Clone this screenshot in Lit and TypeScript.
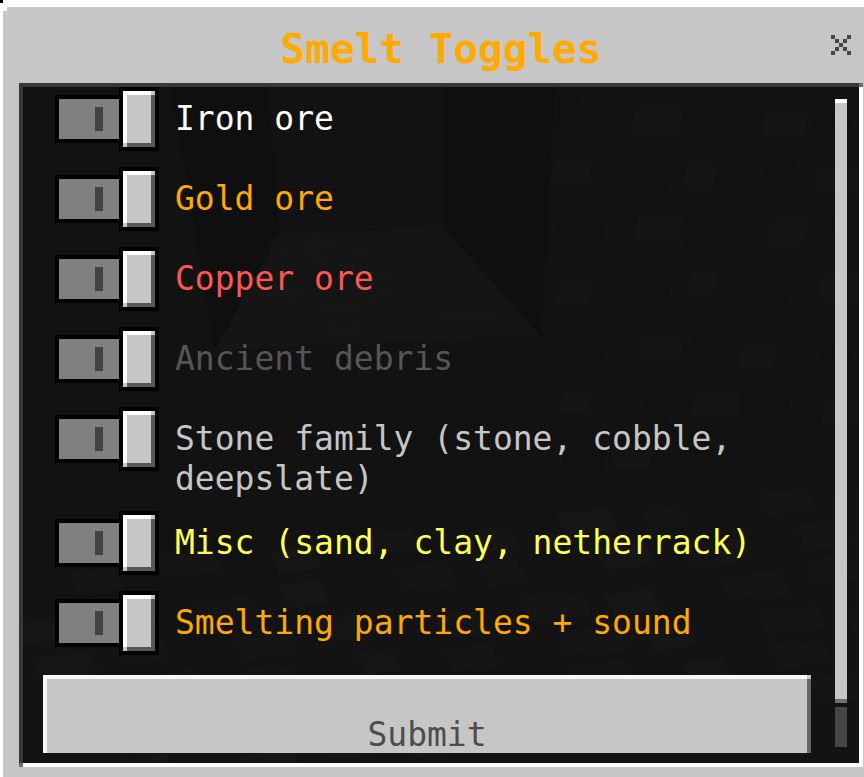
import { LitElement, html, svg, css } from "lit";
import { customElement, state } from "lit/decorators.js";

interface Toggle {
  id: string;
  label: string;
  tone: string;
  on: boolean;
}

@customElement("cave-backdrop")
class CaveBackdrop extends LitElement {
  static styles = css`
    :host { display: block; }
    .scene { display: block; width: 100%; height: 100%; }
  `;

  render() {
    const ground = Array.from({ length: 54 }, (_, i) => {
      const col = i % 9;
      const row = Math.floor(i / 9);
      const x = col * 98 + row * 31 - 70 + ((i * 17) % 29);
      const y = 490 + row * 36 - col * 11 + ((i * 7) % 13);
      const w = 34 + ((i * 13) % 30);
      return svg`<path d="M${x} ${y}l${w} -6l10 22l${-w} 6z" fill=${i % 3 ? "#151515" : "#161615"} />`;
    });
    const wall = Array.from({ length: 32 }, (_, i) => {
      const x = 530 + (i % 5) * 62 + ((i * 19) % 31);
      const y = 10 + Math.floor(i / 5) * 58 + ((i * 11) % 17);
      const w = 28 + ((i * 23) % 26);
      return svg`<path d="M${x} ${y}h${w}l-5 24h${-w}z" fill=${i % 2 ? "#141414" : "#111111"} />`;
    });
    const planks = Array.from({ length: 26 }, (_, i) => {
      const row = i % 9;
      const x = 245 - row * 5 + ((i * 71) % (150 + row * 16));
      const w = 26 + ((i * 9) % 20);
      return svg`<path d="M${x} ${152 + row * 11}l${w} -1v4l${-w} 1z" fill=${i % 2 ? "#171717" : "#141414"} />`;
    });
    return html`
      <svg class="scene" viewBox="0 0 836 676" preserveAspectRatio="none" aria-hidden="true">
        <rect width="836" height="676" fill="#121212" />
        <path d="M0 530L836 400V676H0z" fill="#131313" />
        ${wall}${ground}
        <path d="M148 0H245L257 145L192 263z" fill="#0f0f0f" />
        <path d="M421 0H532L518 249L421 141z" fill="#0f0f0f" />
        <path d="M257 145L421 141L518 249L192 263z" fill="#151515" />
        ${planks}
      </svg>
    `;
  }
}

@customElement("app-root")
class AppRoot extends LitElement {
  static styles = css`
    :host {
      display: block;
      box-sizing: border-box;
      height: 100vh;
      padding: 7px 0 0 3px;
      background: linear-gradient(#000, #000) 0 0 / 3px 3px no-repeat #fff;
      font-family: "DejaVu Sans Mono", "Liberation Mono", monospace;
    }
    .dialog {
      display: flex;
      flex-direction: column;
      box-sizing: border-box;
      height: 100%;
      padding: 0 1px 10px 16px;
      background: linear-gradient(#fff, #fff) 0 0 / 4px 4px no-repeat #c6c6c6;
    }
    .header {
      display: grid;
      grid-template-columns: 1fr auto 1fr;
      align-items: center;
      flex: none;
      height: 76px;
    }
    .title {
      grid-column: 2;
      margin: 0;
      padding-top: 8px;
      font-size: 41px;
      line-height: 48px;
      font-weight: 700;
      color: #ffaa00;
    }
    .close {
      justify-self: end;
      display: flex;
      margin: 0 4px 0 0;
      padding: 8px;
      border: 0;
      background: none;
      cursor: pointer;
    }
    .cross { width: 20px; height: 20px; }
    .frame {
      flex: 1;
      min-height: 0;
      box-sizing: border-box;
      padding: 4px;
      background:
        linear-gradient(#6e6e6e, #6e6e6e) 100% 0 / 4px 4px no-repeat,
        linear-gradient(#6e6e6e, #6e6e6e) 0 100% / 4px 4px no-repeat,
        linear-gradient(#383838, #383838) 0 0 / 100% 4px no-repeat,
        linear-gradient(#383838, #383838) 0 0 / 4px 100% no-repeat,
        #fff;
    }
    .body {
      position: relative;
      display: flex;
      box-sizing: border-box;
      height: 100%;
      padding: 0 12px 10px 20px;
      gap: 24px;
      background: #121212;
    }
    .backdrop { position: absolute; inset: 0; }
    .form {
      position: relative;
      flex: 1;
      min-width: 0;
      overflow-y: auto;
      scrollbar-width: none;
    }
    .rows {
      display: flex;
      flex-direction: column;
      gap: 12px;
      padding-left: 12px;
    }
    .row {
      display: flex;
      align-items: flex-start;
      gap: 16px;
      min-height: 68px;
    }
    .label {
      flex: 1;
      padding-top: 12px;
      font-size: 33px;
      line-height: 40px;
    }
    .iron { color: #ffffff; }
    .gold { color: #ffaa00; }
    .copper { color: #ff5555; }
    .debris { color: #555555; }
    .stone { color: #c6c6c6; }
    .misc { color: #ffff55; }

    .switch {
      appearance: none;
      display: flex;
      align-items: center;
      flex: none;
      width: 104px;
      height: 64px;
      margin: 0;
      cursor: pointer;
    }
    .switch::before {
      content: "";
      box-sizing: border-box;
      width: 64px;
      height: 48px;
      border: 4px solid #000;
      border-right: 0;
      background: linear-gradient(#424242, #424242) 36px 8px / 8px 24px no-repeat #808080;
    }
    .switch::after {
      content: "";
      box-sizing: border-box;
      width: 40px;
      height: 64px;
      border: 4px solid #000;
      background:
        linear-gradient(#c6c6c6, #c6c6c6) 100% 0 / 4px 4px no-repeat,
        linear-gradient(#c6c6c6, #c6c6c6) 0 100% / 4px 4px no-repeat,
        linear-gradient(#fff, #fff) 0 0 / 100% 4px no-repeat,
        linear-gradient(#fff, #fff) 0 0 / 4px 100% no-repeat,
        linear-gradient(#58585a, #58585a) 100% 0 / 4px 100% no-repeat,
        linear-gradient(#58585a, #58585a) 0 100% / 100% 4px no-repeat,
        #c6c6c6;
      background-origin: padding-box;
    }
    .switch:not(:checked) { flex-direction: row-reverse; }

    .submit {
      display: block;
      width: 100%;
      height: 120px;
      margin: 16px 0 0;
      padding: 0;
      border: 0;
      font: inherit;
      font-size: 33px;
      line-height: 40px;
      color: #4c4c4c;
      background:
        linear-gradient(#c6c6c6, #c6c6c6) 100% 0 / 4px 4px no-repeat,
        linear-gradient(#f8f8f8, #f8f8f8) 0 0 / 100% 4px no-repeat,
        linear-gradient(#f8f8f8, #f8f8f8) 0 0 / 4px 100% no-repeat,
        linear-gradient(#666, #666) 100% 0 / 4px 100% no-repeat,
        linear-gradient(#666, #666) 0 100% / 100% 4px no-repeat,
        #c6c6c6;
      cursor: pointer;
    }
    .scrollbar {
      position: relative;
      display: flex;
      flex-direction: column;
      flex: none;
      gap: 4px;
      width: 12px;
      margin: 12px 0 6px;
    }
    .thumb {
      flex: 1;
      box-sizing: border-box;
      border-top: 4px solid #fff;
      border-bottom: 4px solid #707070;
      background: #c6c6c6;
    }
    .track { height: 40px; background: #464646; }
  `;

  @state() private toggles: Toggle[] = [
    { id: "iron", label: "Iron ore", tone: "iron", on: true },
    { id: "gold", label: "Gold ore", tone: "gold", on: true },
    { id: "copper", label: "Copper ore", tone: "copper", on: true },
    { id: "debris", label: "Ancient debris", tone: "debris", on: true },
    { id: "stone", label: "Stone family (stone, cobble, deepslate)", tone: "stone", on: true },
    { id: "misc", label: "Misc (sand, clay, netherrack)", tone: "misc", on: true },
    { id: "effects", label: "Smelting particles + sound", tone: "gold", on: true },
  ];

  private flip(id: string) {
    this.toggles = this.toggles.map((t) => (t.id === id ? { ...t, on: !t.on } : t));
  }

  render() {
    return html`
      <main class="dialog">
        <header class="header">
          <h1 class="title">Smelt Toggles</h1>
          <button class="close" type="button" aria-label="Close">
            <svg class="cross" viewBox="0 0 5 5" shape-rendering="crispEdges" fill="#464646" aria-hidden="true">
              <path d="M0 0h1v1h-1zM4 0h1v1h-1zM1 1h1v1h-1zM3 1h1v1h-1zM2 2h1v1h-1zM1 3h1v1h-1zM3 3h1v1h-1zM0 4h1v1h-1zM4 4h1v1h-1z" />
            </svg>
          </button>
        </header>
        <div class="frame">
          <div class="body">
            <cave-backdrop class="backdrop"></cave-backdrop>
            <form class="form" @submit=${(e: Event) => e.preventDefault()}>
              <div class="rows">
                ${this.toggles.map(
                  (t) => html`
                    <div class="row">
                      <input class="switch" type="checkbox" id=${t.id} .checked=${t.on} @change=${() => this.flip(t.id)} />
                      <label class="label ${t.tone}" for=${t.id}>${t.label}</label>
                    </div>
                  `
                )}
              </div>
              <button class="submit" type="submit">Submit</button>
            </form>
            <div class="scrollbar" aria-hidden="true">
              <div class="thumb"></div>
              <div class="track"></div>
            </div>
          </div>
        </div>
      </main>
    `;
  }
}
